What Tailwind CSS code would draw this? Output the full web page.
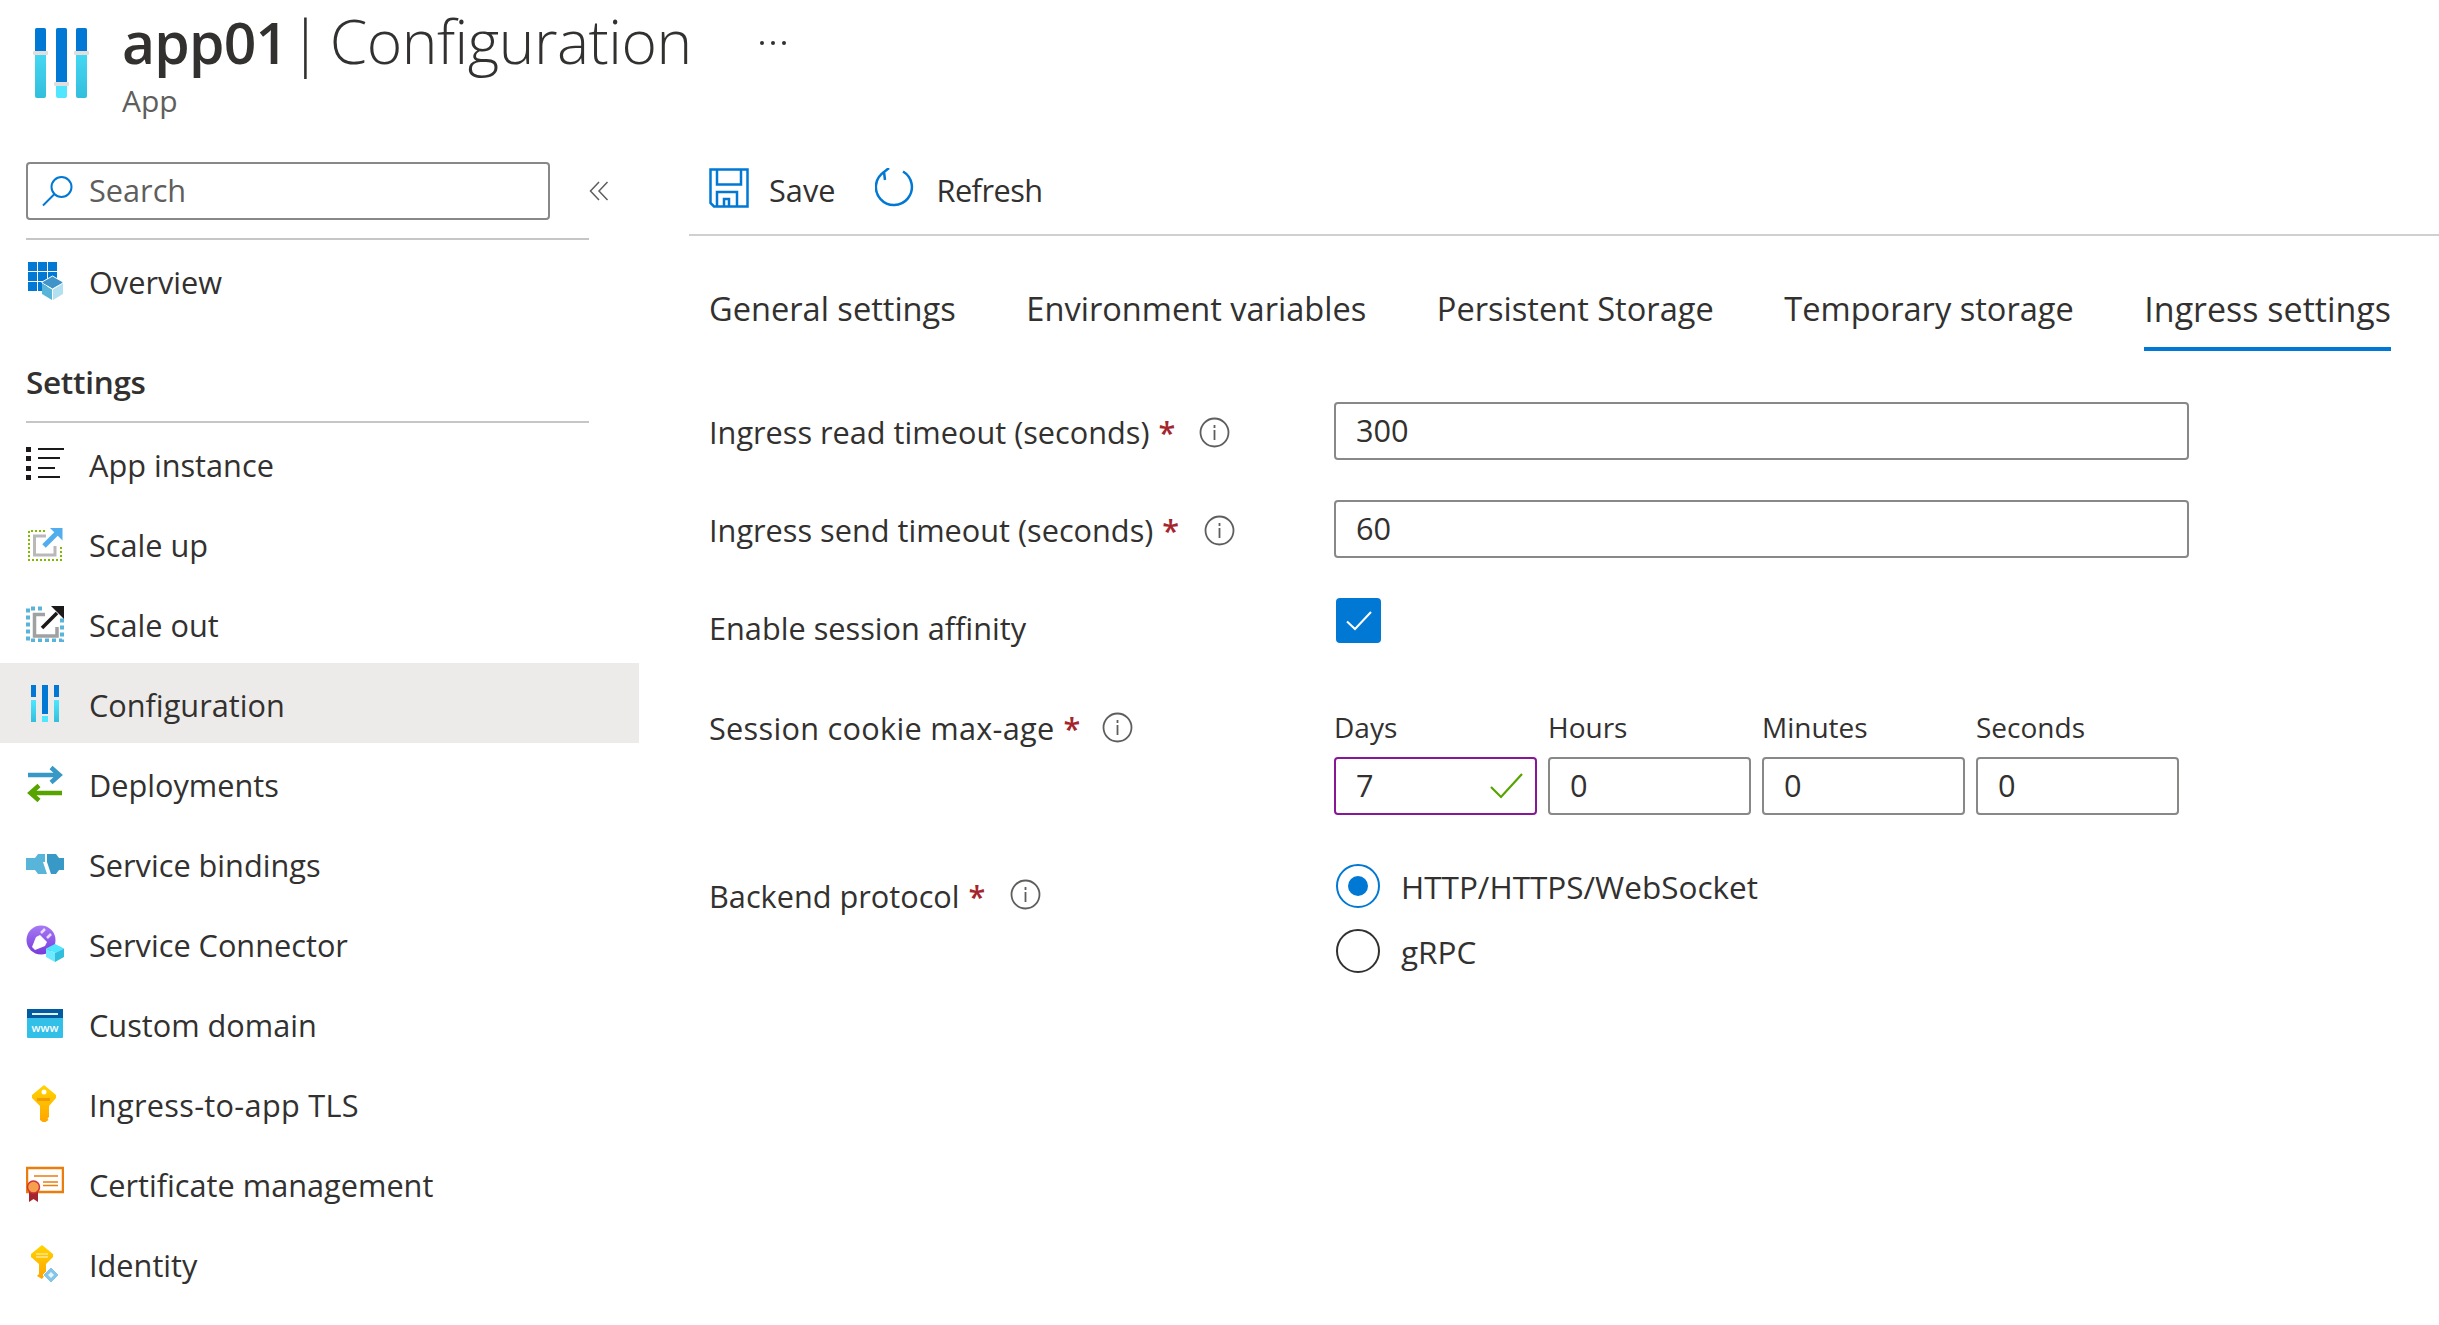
<!DOCTYPE html>
<html lang="en">
<head>
  <meta charset="UTF-8">
  <title>app01 | Configuration</title>
  <script src="https://cdn.jsdelivr.net/npm/@tailwindcss/browser@4"></script>
</head>
<body class="bg-white text-[#323130] font-['Open_Sans',sans-serif] h-[1325px] overflow-hidden text-[30.7px] leading-[42px]">

  <!-- page header -->
  <header class="flex items-start h-[162px] pl-[33px]">
    <svg class="mt-[28px] shrink-0" width="56" height="70" viewBox="0 0 56 70">
      <defs><linearGradient id="hb" x1="0" y1="0" x2="0" y2="1"><stop offset="0" stop-color="#50e6ff"/><stop offset="1" stop-color="#32bedd"/></linearGradient></defs>
      <rect x="2" y="0" width="11" height="70" rx="2" fill="url(#hb)"/><rect x="23" y="0" width="11" height="70" rx="2" fill="#50e6ff"/><rect x="43" y="0" width="11" height="70" rx="2" fill="url(#hb)"/>
      <path d="M2 25V2q0-2 2-2h7q2 0 2 2v23zM23 56V2q0-2 2-2h7q2 0 2 2v54zM43 25V2q0-2 2-2h7q2 0 2 2v23z" fill="#0078d4"/>
      <rect x="0" y="23" width="15" height="4" rx="1" fill="#e1dfdd"/><rect x="21" y="54" width="15" height="4" rx="1" fill="#e1dfdd"/><rect x="41" y="23" width="15" height="4" rx="1" fill="#e1dfdd"/>
    </svg>
    <div class="ml-[33px] pt-[2px]">
      <h1 class="flex items-baseline text-[57px] leading-[78px] whitespace-nowrap"><span class="font-semibold tracking-[-0.8px]">app01</span><span class="ml-[2px] mr-[8px] text-[60px] font-light">|</span><span class="text-[60.5px] font-[350] tracking-[-0.5px]">Configuration</span></h1>
      <p class="text-[30px] leading-[38px] text-[#605e5c] mt-[1px]">App</p>
    </div>
    <div class="ml-[68px] mt-[41px] flex gap-[7px]">
      <span class="w-[4px] h-[4px] rounded-full bg-[#323130]"></span><span class="w-[4px] h-[4px] rounded-full bg-[#323130]"></span><span class="w-[4px] h-[4px] rounded-full bg-[#323130]"></span>
    </div>
  </header>

  <div class="flex">
    <!-- resource menu -->
    <nav class="w-[639px] shrink-0">
      <div class="flex items-center pl-[26px]">
        <div class="w-[524px] h-[58px] border-2 border-[#8a8886] rounded-[4px] flex items-center pl-[14px] text-[#605e5c]">
          <svg width="32" height="32" viewBox="0 0 32 32" fill="none" stroke="#0078d4" stroke-width="2"><circle cx="19.500" cy="12" r="10"/><path d="M12.500 19 1 30.500"/></svg>
          <span class="ml-[15px] pb-[3px]">Search</span>
        </div>
        <svg class="ml-[39px]" width="20" height="20" viewBox="0 0 20 20" fill="none" stroke="#605e5c" stroke-width="1.500"><path d="M10 1 1.500 10l8.500 9M18.500 1 10 10l8.500 9"/></svg>
      </div>
      <div class="ml-[26px] w-[563px] h-[2px] mt-[18px] bg-[#c8c6c4]"></div>

      <a class="flex items-center h-[82px] pl-[26px]">
        <svg class="shrink-0" width="38" height="38" viewBox="0 0 38 38">
          <path d="M2 0h9v9H2zM12 0h9v9h-9zM22 0h9v9h-9zM2 10h9v9H2zM12 10h9v9h-9zM22 10h9v9h-9zM2 20h9v9H2zM12 20h9v9h-9z" fill="#0078d4"/>
          <path d="M26.500 14 37 20v1l-10.500 6L16 21v-1z" fill="#3f94c9" stroke="#fff" stroke-width="1"/><path d="M16 21.500 26 27.500V38L16 32z" fill="#59b4d9"/><path d="M37 21.500 27 27.500V38l10-6z" fill="#b3e0f0"/>
        </svg>
        <span class="ml-[25px] pt-[2px]">Overview</span>
      </a>

      <h2 class="pl-[26px] pt-[42px] pb-[21px] font-semibold leading-[36px] text-[31.5px] tracking-[-0.3px]">Settings</h2>
      <div class="ml-[26px] w-[563px] h-[2px] bg-[#c8c6c4]"></div>

      <a class="flex items-center h-[80px] pl-[26px]">
        <svg class="shrink-0" width="38" height="38" viewBox="0 0 38 38" fill="#1b1a19">
          <path d="M0 3h5v5H0zM0 12h5v5H0zM0 22h5v5H0zM0 31h5v5H0zM12 4h26v2H12zM12 13h22v2H12zM12 23h17v2H12zM12 32h22v2H12z"/>
        </svg>
        <span class="ml-[25px] pt-[4px]">App instance</span>
      </a>
      <a class="flex items-center h-[80px] pl-[26px]">
        <svg class="shrink-0" width="38" height="38" viewBox="0 0 38 38" fill="none">
          <path d="M19 7H3v29h32V21" stroke="#7fba00" stroke-width="2" stroke-dasharray="2 2"/>
          <path d="M20 12H8.500v19H29v-9" stroke="#b9b9b9" stroke-width="3"/>
          <path d="M18 22 31 9" stroke="#50aeef" stroke-width="5"/><path d="M24 4h12.500v12.500z" fill="#50aeef"/>
        </svg>
        <span class="ml-[25px] pt-[4px]">Scale up</span>
      </a>
      <a class="flex items-center h-[80px] pl-[26px]">
        <svg class="shrink-0" width="38" height="38" viewBox="0 0 38 38" fill="none">
          <path d="M16 4.500H2v32h34V14" stroke="#59b4d9" stroke-width="4" stroke-dasharray="4 3"/>
          <path d="M19 10.500H8.500V32H31v-9" stroke="#a0a1a2" stroke-width="3.500"/>
          <path d="M16 24 31 9" stroke="#1b1a19" stroke-width="3.500"/><path d="M25 2h13v13z" fill="#1b1a19"/>
        </svg>
        <span class="ml-[25px] pt-[4px]">Scale out</span>
      </a>
      <a class="flex items-center h-[80px] pl-[26px] bg-[#edebe9]">
        <svg class="shrink-0" width="38" height="38" viewBox="0 0 38 38">
          <defs><linearGradient id="mb" x1="0" y1="0" x2="0" y2="1"><stop offset="0" stop-color="#50e6ff"/><stop offset="1" stop-color="#32bedd"/></linearGradient></defs>
          <path d="M5 1h5v12H5zM16 1h6v29h-6zM28 1h5v12h-5z" fill="#0078d4"/>
          <path d="M5 16h5v22H5zM28 16h5v22h-5z" fill="url(#mb)"/><path d="M16 32h6v6h-6z" fill="#50e6ff"/>
        </svg>
        <span class="ml-[25px] pt-[4px]">Configuration</span>
      </a>
      <a class="flex items-center h-[80px] pl-[26px]">
        <svg class="shrink-0" width="38" height="38" viewBox="0 0 38 38" fill="none" stroke-width="4.500">
          <path d="M2 11h31M25 3.500l8.500 7.500-8.500 7.500" stroke="#3999c6"/>
          <path d="M36 29H5M13 21.500 4.500 29l8.500 7.500" stroke="#57a300"/>
        </svg>
        <span class="ml-[25px] pt-[4px]">Deployments</span>
      </a>
      <a class="flex items-center h-[80px] pl-[26px]">
        <svg class="shrink-0" width="38" height="38" viewBox="0 0 38 38">
          <path d="M0 14h9l3-4h7v8h-2l4 12H12l-3-4H0z" fill="#59b4d9"/>
          <path d="M21 10h9l3 4h5v12h-5l-3 4h-5l-4-12h0z" fill="#3999c6"/>
        </svg>
        <span class="ml-[25px] pt-[4px]">Service bindings</span>
      </a>
      <a class="flex items-center h-[80px] pl-[26px]">
        <svg class="shrink-0" width="38" height="38" viewBox="0 0 38 38">
          <defs><linearGradient id="sc" x1="0" y1="0" x2="0" y2="1"><stop offset="0" stop-color="#a67af4"/><stop offset="1" stop-color="#773adc"/></linearGradient></defs>
          <circle cx="15" cy="16" r="14.500" fill="url(#sc)"/>
          <path d="M6 23l4-10 4-2 7 7-2 4-10 4z" fill="#fff"/><path d="M15 9l4-4M21 14l4-4" stroke="#e8dcff" stroke-width="2.500"/>
          <path d="M29 20l9 4.500-9 4.500-9-4.500z" fill="#50e6ff"/><path d="M20 24.500l9 4.500v9l-9-5z" fill="#6fe9ff"/><path d="M38 24.500l-9 4.500v9l9-5z" fill="#32bedd"/>
        </svg>
        <span class="ml-[25px] pt-[4px]">Service Connector</span>
      </a>
      <a class="flex items-center h-[80px] pl-[26px]">
        <svg class="shrink-0" width="38" height="38" viewBox="0 0 38 38">
          <rect x="1" y="5" width="36" height="29" rx="1" fill="#32bfe8"/><rect x="1" y="5" width="36" height="9" fill="#005ba1"/><rect x="6" y="9" width="26" height="2" fill="#e1f4fb"/>
          <text x="19" y="28" text-anchor="middle" font-size="11" font-family="Open Sans" font-weight="600" fill="#fff">www</text>
        </svg>
        <span class="ml-[25px] pt-[4px]">Custom domain</span>
      </a>
      <a class="flex items-center h-[80px] pl-[26px]">
        <svg class="shrink-0" width="38" height="38" viewBox="0 0 38 38">
          <defs><linearGradient id="ky" x1="0" y1="0" x2="0" y2="1"><stop offset="0" stop-color="#ffd400"/><stop offset="1" stop-color="#ffa400"/></linearGradient></defs>
          <path d="M18 1 30 11v3L23 22v11l-1.500 1.500 1 1.500-4.500 3-4-3V22L6 14v-3z" fill="url(#ky)"/>
          <circle cx="18" cy="8" r="2.500" fill="#fff"/><path d="M11 14h13v3H11z" fill="#f29b00"/>
        </svg>
        <span class="ml-[25px] pt-[4px] tracking-[0.3px]">Ingress-to-app TLS</span>
      </a>
      <a class="flex items-center h-[80px] pl-[26px]">
        <svg class="shrink-0" width="38" height="38" viewBox="0 0 38 38">
          <rect x="1" y="4" width="36" height="24" fill="#fff" stroke="#ea7d0e" stroke-width="2.500"/>
          <path d="M8 12h24M17 18h15M17 21.500h15" stroke="#ea7d0e" stroke-width="1.500"/>
          <path d="M3 27h9v11l-4.500-3L3 38z" fill="#a4262c"/><circle cx="7.500" cy="23" r="6" fill="#f5a04c" stroke="#d13438" stroke-width="1.500"/>
        </svg>
        <span class="ml-[25px] pt-[4px]">Certificate management</span>
      </a>
      <a class="flex items-center h-[80px] pl-[26px]">
        <svg class="shrink-0" width="38" height="38" viewBox="0 0 38 38">
          <path d="M16 1 27 10v3L20 20v10l-2 2-2 3-5-3 2-2V20L5 13v-3z" fill="url(#ky)"/>
          <path d="M10 10h12M10 13h12" stroke="#ffe690" stroke-width="1.500"/>
          <path d="M25 23l8 8-8 8-8-8z" fill="#83c6e8" stroke="#fff" stroke-width="1"/><path d="M22 31l3-3 3 3-3 3z" fill="#e7f5fb"/>
        </svg>
        <span class="ml-[25px] pt-[4px]">Identity</span>
      </a>
    </nav>

    <!-- content -->
    <main class="flex-1 ml-[50px] min-w-0">
      <div class="flex items-center h-[74px] border-b-2 border-[#d2d0ce] pl-[20px] pb-[20px]">
        <svg class="shrink-0" width="40" height="40" viewBox="0 0 40 40" fill="none" stroke="#0078d4" stroke-width="2.500"><path d="M1.500 1.500h37v37H5l-3.500-3.500z"/><path d="M8 1.500v15h24v-15M8 38.500V24h20v14.500M15 38.500V31h5v7.500"/></svg>
        <span class="ml-[20px] pt-[4px]">Save</span>
        <svg class="ml-[40px] shrink-0" width="40" height="40" viewBox="0 0 40 40" fill="none" stroke="#0078d4" stroke-width="2.500"><path d="M28 3.500a18 18 0 1 1-19 .5"/><path d="M14 0 9 4l1 8"/></svg>
        <span class="ml-[21px] pt-[4px] tracking-[-0.5px]">Refresh</span>
      </div>

      <div class="flex gap-[70.5px] pl-[20px] mt-[52px] whitespace-nowrap text-[32.6px]">
        <span class="pb-[21px]">General settings</span>
        <span class="pb-[21px]">Environment variables</span>
        <span class="pb-[21px]">Persistent Storage</span>
        <span class="pb-[21px]">Temporary storage</span>
        <span class="pb-[17px] border-b-4 border-[#0078d4] font-medium text-[34px]">Ingress settings</span>
      </div>

      <form class="pl-[20px] pt-[51px]">
        <div class="flex h-[58px]">
          <label class="w-[625px] shrink-0 pt-[9px] flex items-start">Ingress read timeout (seconds)<span class="text-[#a4262c] font-semibold ml-[9px]">*</span>
            <svg class="ml-[24px] mt-[6px]" width="31" height="31" viewBox="0 0 31 31" fill="none" stroke="#605e5c" stroke-width="1.800"><circle cx="15.500" cy="15.500" r="14"/><path d="M15.500 13v10M15.500 8v3"/></svg>
          </label>
          <div class="w-[855px] h-[58px] border-2 border-[#8a8886] rounded-[4px] pl-[20px] leading-[52px]">300</div>
        </div>
        <div class="flex h-[58px] mt-[40px]">
          <label class="w-[625px] shrink-0 pt-[9px] flex items-start">Ingress send timeout (seconds)<span class="text-[#a4262c] font-semibold ml-[9px]">*</span>
            <svg class="ml-[25px] mt-[6px]" width="31" height="31" viewBox="0 0 31 31" fill="none" stroke="#605e5c" stroke-width="1.800"><circle cx="15.500" cy="15.500" r="14"/><path d="M15.500 13v10M15.500 8v3"/></svg>
          </label>
          <div class="w-[855px] h-[58px] border-2 border-[#8a8886] rounded-[4px] pl-[20px] leading-[52px]">60</div>
        </div>
        <div class="flex mt-[40px] h-[45px]">
          <label class="w-[625px] shrink-0 pt-[9px]">Enable session affinity</label>
          <div class="w-[45px] h-[45px] ml-[2px] rounded-[4px] bg-[#0078d4] flex items-center justify-center">
            <svg width="26" height="20" viewBox="0 0 26 20" fill="none" stroke="#fff" stroke-width="2"><path d="M1 10.500 9 18 25 1"/></svg>
          </div>
        </div>
        <div class="flex mt-[64px]">
          <label class="w-[625px] shrink-0 flex items-start tracking-[0.28px]">Session cookie max-age<span class="text-[#a4262c] font-semibold ml-[9px]">*</span>
            <svg class="ml-[21px] mt-[5px]" width="31" height="31" viewBox="0 0 31 31" fill="none" stroke="#605e5c" stroke-width="1.800"><circle cx="15.500" cy="15.500" r="14"/><path d="M15.500 13v10M15.500 8v3"/></svg>
          </label>
          <div class="grid grid-cols-[203px_203px_203px_203px] gap-x-[11px]">
            <span class="text-[28px] leading-[40px]">Days</span><span class="text-[28px] leading-[40px]">Hours</span><span class="text-[28px] leading-[40px]">Minutes</span><span class="text-[28px] leading-[40px]">Seconds</span>
            <div class="mt-[10px] h-[58px] border-2 border-[#881798] rounded-[4px] pl-[20px] pb-[2px] flex justify-between items-center pr-[12px]">7
              <svg class="mt-[2px]" width="33" height="26" viewBox="0 0 33 26" fill="none" stroke="#57a300" stroke-width="2.200"><path d="M1 14l10 10L32 1"/></svg>
            </div>
            <div class="mt-[10px] h-[58px] border-2 border-[#8a8886] rounded-[4px] pl-[20px] leading-[52px]">0</div>
            <div class="mt-[10px] h-[58px] border-2 border-[#8a8886] rounded-[4px] pl-[20px] leading-[52px]">0</div>
            <div class="mt-[10px] h-[58px] border-2 border-[#8a8886] rounded-[4px] pl-[20px] leading-[52px]">0</div>
          </div>
        </div>
        <div class="flex mt-[49px]">
          <label class="w-[625px] shrink-0 pt-[11px] flex items-start">Backend protocol<span class="text-[#a4262c] font-semibold ml-[9px]">*</span>
            <svg class="ml-[25px] mt-[4px]" width="31" height="31" viewBox="0 0 31 31" fill="none" stroke="#605e5c" stroke-width="1.800"><circle cx="15.500" cy="15.500" r="14"/><path d="M15.500 13v10M15.500 8v3"/></svg>
          </label>
          <div class="flex flex-col gap-[21px] ml-[2px] text-[31.5px]">
            <div class="flex items-center gap-[21px]">
              <span class="w-[44px] h-[44px] rounded-full border-2 border-[#0078d4] flex items-center justify-center"><span class="w-[20px] h-[20px] rounded-full bg-[#0078d4]"></span></span>
              <span class="pt-[2px]">HTTP/HTTPS/WebSocket</span>
            </div>
            <div class="flex items-center gap-[21px]">
              <span class="w-[44px] h-[44px] rounded-full border-2 border-[#323130]"></span>
              <span class="pt-[2px]">gRPC</span>
            </div>
          </div>
        </div>
      </form>
    </main>
  </div>
</body>
</html>
